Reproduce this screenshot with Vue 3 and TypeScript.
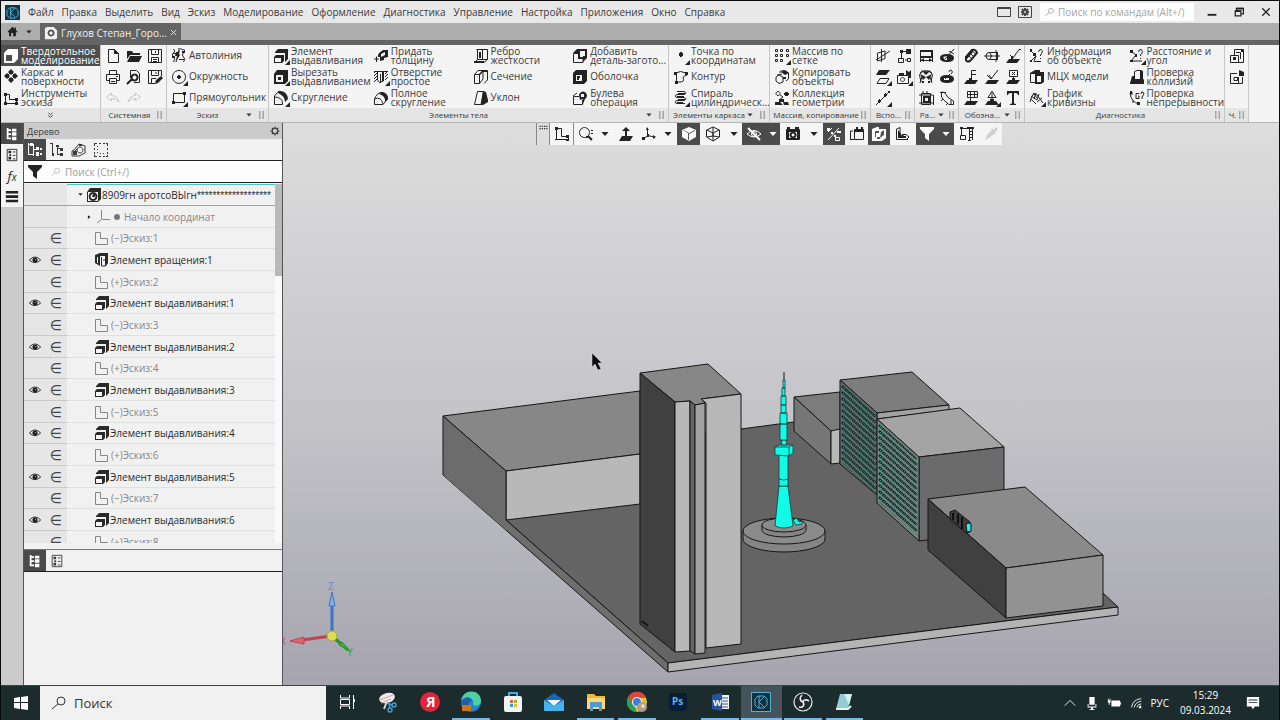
<script setup lang="ts">
import { h, ref } from 'vue'

/* Each icon is a list of "kind:path" parts on a 16 x 16 grid.
   s = thin stroke, b = bold stroke, f = solid,
   any other kind is a literal fill colour. */
const glyphs: Record<string, string> = {
  solidLight: 'f:M1 5L5 1H15V11L11 15H1Z|#4f4f4f:M3 7H9V13H3Z|s:M11 5L15 1',
  surface: 'f:M1 7L4 4L7 7L4 10ZM5 3L8 0L11 3L8 6ZM9 7L12 4L15 7L12 10ZM5 11L8 8L11 11L8 14Z|s:M4 7L8 11L12 7L8 3Z',
  sketchTools: 's:M2.5 3V13M3 4.5H6.5V9.5H13M13.5 9V13.5H3|f:M1 12H4V15H1ZM12 12H15V15H12ZM1 3H4V6H1ZM12 8H15V11H12Z',
  newFile: 's:M3.5 1.5H9.5L13.5 5.5V14.5H3.5Z|f:M9 1V6H14Z',
  open: 'f:M1 3H6L7 5H14V7H4L1 11ZM4 8H16L13 14H1Z',
  save: 's:M1.5 1.5H14.5V14.5H1.5ZM4.5 1.5V6.5H11.5V1.5M4.5 14.5V9.5H11.5V14.5M8.5 3V5M6 11.5H10M6 13.5H10',
  saveAs: 's:M1.5 1.5H14.5V7M8 14.5H1.5V1.5M4.5 1.5V6.5H11.5V1.5M4.5 14V9.5H9M9 3V5|f:M8 15L9 11L14 7L16 9L11 14Z',
  print: 's:M4.5 5V1.5H11.5V5M4 11.5H1.5V5.5H14.5V11.5H12M4.5 9.5H11.5V14.5H4.5ZM6 12.5H10|f:M11 7H13V8H11Z',
  preview: 's:M4.5 9V1.5H10.5L13.5 4.5V13.5H8|b:M8.5 5.5A3 3 0 1 0 8.6 5.5M6 10L1 15',
  undo: 's:M6.5 3L1.5 7L6.5 11V8.5Q11 8 14 12Q13 6 6.5 5.5Z',
  redo: 's:M9.5 3L14.5 7L9.5 11V8.5Q5 8 2 12Q3 6 9.5 5.5Z',
  autoline: 's:M2.5 1Q5 3 2.5 5T2.5 9T2.5 14M8 2L5 14M12.5 1Q15 3 12.5 5T12.5 9T12.5 14M2 5.5H8M8 11.5H13M7 1Q10 0 12 2|f:M5 4H7L9 2L8 6L9 7L6 12V8H4ZM11 3H14V5H11ZM1 8H4V10H1Z',
  circle: 's:M14.5 8A6.5 6.5 0 1 1 14.5 7.9|f:M7 6H9V7H10V9H9V10H7V9H6V7H7Z',
  rect: 's:M2.5 3.5H13.5V12.5H2.5Z|f:M12 2H15V5H12ZM1 11H4V14H1Z',
  extrude: 'f:M2 4L5 1H15V11L12 14V5H2Z|f:M1 9L3 7H11V13L9 15H1Z|#f4f4f4:M2 10H8V14H2Z',
  cut: 'f:M1 5L4 1H15V12L12 15H1Z|#f4f4f4:M3 6H10V13H3Z|f:M5 8H8V11H5Z',
  fillet: 's:M1.5 14.5V6Q4 1.5 8 1.5M1.5 14.5H9.5V13Q9 7 1.5 7|f:M5 1Q14 0 15 9L12 12Q12 6 5 3Z',
  thick: 's:M1 11H6M3.5 8.5V14M6.5 5.5L12.5 2.5|f:M6 5L10 2H15V9L11 10V12L7 13V9H5V7Z|#f4f4f4:M8 6L12 4V7L8 9Z',
  hole: 's:M1 2.5H15M4.5 2V11L7 14L10.5 11V2M1 4L3 2M1 7L4 4M1 10L4 7M1 13L4 10M12 5L15 2M12 8L15 5M12 11L15 8M7.5 5V13|f:M9 3H11V12L9 13Z',
  fullFillet: 's:M1.5 14.5V9Q4 2.5 9 2.5Q14.5 3 14.5 9L10 14.5H1.5M1.5 9Q8 6 10 14|f:M8 2Q15 3 15 9L12 12Q13 6 6 4Z',
  rib: 's:M3.5 1.5H14.5V11.5L11 14.5H1.5L4.5 11.5V2M4 11.5H14M9.5 2V11|b:M7 4V10M1 14H11',
  section: 's:M1.5 5.5L5 1.5H14.5V11L11 14.5M1.5 5.5H6.5V14.5H1.5ZM6.5 5.5L10 1.5V10L6.5 14.5|f:M6 5L10 1V3L7 6V14H6ZM10 1H14V3H10Z',
  draft: 's:M4.5 1.5H10.5L8 14.5H1.5Z|f:M10 1L13 2L15 10V12L10 15H8Z',
  addPart: 'f:M1 5L5 1H15V10L11 14V6Z|#f4f4f4:M8 3H13V8H8Z|s:M1.5 5.5H6.5V10.5H11V14.5H1.5Z|f:M6 5H8V9H12V11H6Z',
  shell: 'f:M1 4L4 1H15V12L12 15H1Z|#f4f4f4:M4 6H10V12H4Z|f:M5 7H8V9H7V11H5Z',
  bool: 's:M1.5 14.5V6.5H7M1.5 14.5H10.5V10M1 6L5 3|f:M7 5A4 4 0 1 1 13 9L11 14V9L8 10Z|#f4f4f4:M9 4H12V7H9Z',
  point: 'f:M6 5H7V4H9V5H10V8H9V9H7V8H6Z',
  contour: 's:M3 4Q7 1 13 4M3.5 4V13H7Q12 13 10 9Q10 7 14 6|f:M1 3H4V6H1ZM2 12H5V15H2ZM12 3H15V6H12Z',
  spiral: 's:M4 1.5H11Q15 3 11 4.5H4Q0 6 4 7.5H11Q15 9 11 10.5H4Q0 12 4 13.5H12M5 3.5H12M4 6.5H11M5 9.5H12M4 12.5H10',
  array: 's:M1.5 1.5H3.5V3.5H1.5ZM6.5 1.5H8.5V3.5H6.5ZM12.5 1.5H14.5V3.5H12.5ZM1.5 6.5H3.5V8.5H1.5ZM6.5 6.5H8.5V8.5H6.5ZM12.5 6.5H14.5V8.5H12.5ZM1.5 11.5H3.5V13.5H1.5ZM6.5 11.5H8.5V13.5H6.5Z',
  copy: 's:M6 4V2.5L9 1.5L14.5 4V10L12 12M2 8L5 6L9 8V13L5 14.5L2 12ZM3 6L8 5|f:M7 3L11 1L15 4L11 6ZM9 8H12V10H9Z',
  collection: 's:M4 1.5A2 2 0 1 0 4.1 1.5M9 7L5 10M6 5L9 7|f:M11 2H14V3H15V5H14V6H11V5H10V3H11ZM5 9H10V12H5ZM1 12H6L9 15H1ZM9 12H14L15 15H10Z',
  plane3d: 's:M2.5 5V13L10 10.5V3ZM1 12L15 3M6.5 1V14',
  plane: 'f:M4 1H15L11 6H1Z|s:M5 9.5H14L11 14.5H2Z',
  axis: 's:M1 15L15 1M4.5 9V13M10.5 3V7|f:M3 10H6V12H3ZM9 4H12V6H9ZM13 1H15V3H13Z',
  ctrlPoint: 's:M5.5 3V10M2.5 10.5H7.5V14.5H2.5ZM6 3.5H11M11.5 10.5H14.5V13.5H11.5ZM9 12H11|f:M10 1H15V6H10ZM4 2H7V5H4Z',
  camera: 's:M1.5 6.5H12.5V14.5H1.5ZM6.5 8.5A2 2 0 1 0 6.6 8.5|f:M3 4H8V6H3ZM10 1L13 3L15 1V9H13V6H10Z',
  dimLin: 's:M2.5 2V14M14.5 2V14M3 12.5H14|b:M2 3H14V9H2|f:M3 12L6 10V14ZM14 12L11 10V14Z',
  dimRad: 'f:M1 10Q1 6 8 6T15 10T8 14T1 10Z|#f4f4f4:M4 9L8 8V12H6Z|s:M6 11L15 1M10 3L15 6',
  dimAng: 's:M1.5 6L4 2H12L14.5 6L13 13M1.5 6L3 13M2 4Q8 0 14 4M4 8L2 14M12 8L14 14|f:M2 5L8 8L5 11ZM14 5L8 8L11 11ZM5 3H11L8 6ZM4 12H6V14H4ZM10 12H12V14H10Z',
  dimBox: 's:M3.5 3.5H12.5V14.5H3.5ZM5 1V4M9 1V4M15.5 5V15M1 5H15M1 13H16|b:M6 7H11V12H6Z',
  dimDia: 'f:M1 10Q1 6 8 6T15 10T8 14T1 10Z|#f4f4f4:M5 9H10V11H5Z|s:M6 10L11 5M10 3Q10 1 12 1Q15 3 12 5',
  dimArc: 's:M2.5 2V7Q4 10 10 14.5H14.5V11Q8 8 5.5 2.5ZM1 2.5H7M12 10V15M4 9L2 11M9 13L7 15',
  thread: 'b:M3 9L9 2Q13 1 14 5L7 13Q2 15 3 9Z|s:M5 7L9 11M7 5L11 9M9 3L13 6|f:M2 9L9 2L10 4L4 11Z',
  cyl: 's:M5 4.5H12.5V11.5H5Q2 11 2 8T5 4.5ZM0 8H16M6 5Q9 8 6 11M12 2V5M12 11V14|f:M12 4H14V12H12Z',
  rough: 'f:M1 15L4 11H15L12 15ZM6 8H8V11H6Z|s:M5 7L8 10L14 1.5H16',
  base: 'f:M1 15L4 11H15L12 15ZM6 9H9V11H6Z|s:M8.5 9V1.5H13M8 5.5H13',
  leader: 'f:M1 15L4 11H15L12 15Z|s:M3 6L7 10L14 1M5 6L8 10',
  mark: 'f:M1 15L4 11H15L12 15ZM7 9H10V11H7Z|s:M4.5 1.5H12.5V7.5H4.5ZM7 3L10 6M10 3L7 6M8.5 8V10',
  tolerance: 'f:M1 15L4 11H15L12 15Z|s:M4.5 1.5H14.5V7.5H4.5ZM7.5 2V11M11.5 2V7M5 4.5H14',
  weld: 'f:M1 15L4 11H12L15 15ZM6 9H10V11H6Z|s:M4 7.5L8 1L12 7.5ZM8 3V9',
  textT: 'f:M2 1H14V5H13Q13 3 10 3H9V13Q9 14 11 14V15H5V14Q7 14 7 13V3H6Q3 3 3 5H2Z',
  info: 's:M1.5 2.5L6 7M2 13L7 8L5 13.5H12M9.5 4Q10 1 12 1.5Q15 3 11.5 7V8M11.5 10V11|f:M1 1H3V4H1ZM4 5H7V8H4ZM1 12H3V14H1Z',
  mass: 'f:M1 4L6 1H11V3H15V13L12 15H6V5H1Z|#f4f4f4:M8 7H12V13H8Z|s:M1.5 5V13.5H6',
  curvature: 's:M1 12Q4 0 8 5T14 13M2 9L7 14M2 6L8 10M4 3L9 9M7 3L5 9M10 4L8 10M13 8L8 12',
  distance: 's:M2 3L7 7L2 13H13M9.5 4Q10 1 12 1.5Q15 3 11.5 7V8M11.5 10V11|f:M1 2H4V5H1ZM6 6H8V9H6ZM1 12H4V14H1Z',
  collision: 's:M5.5 9V2.5L8 1.5H12.5V9M1 13H12|f:M3 7H6V10H12V7L15 11V15H1Z|f:M11 2H14V10H11Z',
  continuity: 's:M1 3Q2 12 10 14M3 2V5M4 10V13M10 3.5H7V8.5H10V6H9M12 4Q12 1 14 2L15 4L13 7V9|f:M1 1H3V4H1ZM8 12H11V15H8Z',
  drawA: 's:M5.5 7V1.5H14.5V14.5H1.5V7.5H9.5V14M7 4.5H11.5V11|f:M12 2H14V4H12ZM4 9H7V12H4Z',
  drawB: 's:M8 4.5H1.5V14.5H13.5V8M5 8.5H8.5V11.5H5ZM9.5 8V14|f:M10 1L15 3V7H10Z',
  gear: 'b:M8 3.5A4.5 4.5 0 1 1 7.9 3.5M8 1V4M8 12V15M1 8H4M12 8H15M3 3L5 5M11 11L13 13M13 3L11 5M5 11L3 13',
  tree: 'b:M3 1V14M3 3.5H7M3 8H7M3 13H7|f:M8 2H13V5H8ZM8 6H13V10H8ZM8 11H13V15H8Z',
  params: 's:M2.5 1.5H13.5V14.5H2.5ZM9 4.5H12M9 8.5H12M9 12.5H12|f:M4 3H7V6H4ZM4 10H7V13H4ZM5 7H7V9H5Z',
  bars: 'f:M1 1H15V4H1ZM1 6H15V9H1ZM1 11H15V14H1Z',
  treeA: 's:M1.5 1V13M1 2.5H4M1 12.5H6M6.5 2V14M6 7.5H9|f:M3 1H6V4H3ZM9 5H12V8H9ZM9 10H12V14H9ZM13 6H15V8H13ZM13 11H15V13H13Z',
  treeB: 's:M1 1.5H4M3.5 1V13M8.5 4V13M8 6.5H11M8 12.5H11|f:M3 11H5V14H3ZM7 3H10V5H7ZM11 6H14V9H11ZM11 11H14V14H11Z',
  relations: 's:M3 8L8 2L14 4V11L8 14H1V9ZM9 5A3 3 0 1 0 9.1 5M3 10L7 6|f:M2 9H6V13H2ZM8 2H11V4H8Z',
  selectBox: 'f:M1 1H4V2H2V4H1ZM6 1H8V2H6ZM10 1H12V2H10ZM13 1H15V4H14V2H13ZM1 6H2V8H1ZM1 10H2V12H1ZM14 6H15V8H14ZM14 10H15V12H14ZM1 13H2V14H4V15H1ZM6 14H8V15H6ZM10 14H12V15H10ZM13 14H14V13H15V15H13ZM4 4H5V5H4ZM4 7H5V8H4ZM4 10H5V11H4ZM7 11H8V12H7ZM10 11H11V12H10Z',
  funnel: 'f:M1 1H15V3L10 8V15L6 12V8L1 3Z',
  search: 's:M7 6A4 4 0 1 0 15 6A4 4 0 1 0 7 6M8 9L2 14',
  docPart: 'f:M1 5L4 1H15V12L12 15H1Z|#f4f4f4:M2 5H12V14H2Z|b:M7 6A3.5 3.5 0 1 0 7.1 6|f:M7 7H9V10H6Z',
  docLight: 'f:M1 4Q1 1 4 1H11L15 5V14L13 15H1Z|#4a4a4a:M8 4A4 4 0 1 0 8.1 4Z|f:M8 6A2 2 0 1 0 8.1 6Z',
  origin: 's:M6.5 1V10.5M7 10.5H15M6 11L2 14',
  sketch: 's:M1.5 2.5H6.5V8.5H13.5V14.5H1.5Z',
  revolve: 'f:M1 3L6 1H14V11L12 14V4H6V14L1 11Z|s:M7.5 5V14H11.5V4M9 8H11|#f4f4f4:M3 5H4V11H3Z',
  eye: 's:M1.5 8Q8 1 14.5 8Q8 14 1.5 8|f:M8 5A3 3 0 1 0 8.1 5Z|#e6e6e6:M8 7H9V8H8Z',
  fix: 's:M2.5 1V14M1 2.5H7.5V10.5H14.5V14M1 13.5H15|f:M1 1H4V4H1ZM12 9H15V12H12ZM12 13H15V15H12Z',
  magnify: 's:M11.5 6.5A5 5 0 1 0 11.5 6.6M13 4.5H15M13 7.5H15|b:M10 10L14 14|f:M8 10H10V12H8Z',
  lift: 'f:M4 10H15L12 15H1ZM8 1L12 5H9V11H7V5H4Z',
  axes: 's:M6.5 2V10L2 13M7 9.5L13 11|f:M6 1L8 4H5ZM12 9L15 11L12 13ZM1 11H4V14H1ZM6 8H8V11H6Z',
  cube: 'f:M1 4L8 1L15 4V11L8 15L1 11Z|#555:M7 7H8V14H7ZM2 4L3 4L8 7L14 4V5L8 8Z',
  wire: 's:M1.5 4L8 1L14.5 4V11L8 15L1.5 11ZM2 4L8 7L14 4M8 7V15M8 1V10L14 11M8 10L2 11',
  eyeOff: 's:M1 8Q8 1 15 8Q8 14 1 8M5.5 8A2.5 2.5 0 1 0 10.5 8A2.5 2.5 0 1 0 5.5 8|b:M2 2L14 14',
  snapCam: 's:M1.5 3.5H14.5V13.5H1.5Z|f:M2 1H5V4H2ZM10 1H14V4H10ZM1 4H4V13H1ZM12 4H15V13H12ZM4 4H12V6H4ZM4 12H12V14H4Z|b:M8 6.5A2.5 2.5 0 1 0 8.1 6.5',
  constraint: 's:M13 2L2 14M9.5 11.5H13.5V14.5H9.5ZM2 6L6 2|f:M11 5H15V7H11ZM1 2H4V5H1ZM5 6H7V8H5ZM8 9H10V11H8Z',
  windowIn: 's:M5.5 3.5H14.5V13.5H5.5ZM1.5 13V5H4M1 13.5H5|f:M7 1H9V4H7ZM12 1H14V4H12ZM5 4H15V6H5Z',
  solidBox: 'f:M1 3L6 1H8V3L15 3V12L11 15H1Z|#555:M4 5H8V7H5V11H4ZM10 6L13 4V9L9 12ZM6 11H9V13H6Z',
  hiddenPart: 's:M1.5 3V13.5H13M1.5 3L5 1.5V9L9 10M7 8.5H11L14 11L12 13|f:M3 4L6 8V10H11V12H3Z',
  gauge: 's:M1 2.5H9M2.5 2V9M1.5 9.5H6.5V13.5H1.5ZM10.5 3V14M13.5 3V14M9 14.5H12|f:M1 1H4V3H1ZM8 1H15V3H8ZM11 5H13V6H11ZM11 8H13V9H11ZM11 11H13V12H11Z',
  pen: 'f:M2 14L4 9L9 4L8 3L9 2L11 4L13 1L15 3L12 6L13 8L11 8L6 12Z',
  grip: 'f:M2 1H5V3H2ZM9 1H12V3H9ZM2 5H5V7H2ZM9 5H12V7H9ZM2 9H5V11H2ZM9 9H12V11H9ZM2 13H5V15H2ZM9 13H12V15H9Z',
  gripWide: 'f:M1 5H3V7H1ZM5 5H7V7H5ZM9 5H11V7H9ZM13 5H15V7H13ZM1 9H3V11H1ZM5 9H7V11H5ZM9 9H11V11H9ZM13 9H15V11H13Z',
  down: 'f:M1 4H15L8 12Z',
  right: 'f:M5 3L12 8L5 13Z',
  chevrons: 'b:M3 2L8 6L13 2M3 8L8 12L13 8',
  home: 'f:M1 8L8 1L11 4V2H13V6L15 8V9H13V15H9V10H6V15H3V9H1Z',
  close: 'b:M2 2L14 14M14 2L2 14',
  minimize: 'f:M1 11H15V14H1Z',
  restore: 'b:M2 6H11V14H2ZM4 5V2H15V11H12|f:M2 5H11V8H2ZM4 1H15V4H4Z',
  frame: 's:M1.5 3.5H14.5V12.5H1.5ZM2 4.5H14',
  frameGear: 's:M1.5 2.5H14.5V13.5H1.5Z|b:M8 6A2 2 0 1 0 8.1 6M8 4V6M8 10V12M4 8H6M10 8H12M5 5L6 6M10 10L11 11M11 5L10 6M6 10L5 11',
  taskView: 's:M1.5 1V4H10.5V1M1.5 15V12H10.5V15M1.5 5.5H10.5V10.5H1.5ZM14.5 1V15|f:M14 5H16V8H14Z',
  windows: 'f:M1 3L7 2V7H1ZM8 2L15 1V7H8ZM1 8H7V14L1 13ZM8 8H15V15L8 14Z',
  chevUp: 's:M2 11L8 5L14 11',
  mic: 'f:M5 1H11V10H5ZM3 9H4V12H12V9H13V13H9V15H11V16H5V15H7V13H3Z',
  battery: 'f:M5 5H15V12H5ZM1 3H2V5H3V3H4V7L3 8V10H2V8L1 7Z|s:M15.5 7V10',
  wifi: 's:M3 13Q4 4 14 3M6 13Q7 7 14 6M9 13Q10 9 14 9|f:M12 11H14V14H11Z',
  note: 'f:M1 1H15V12H10L8 15L6 12H1Z|#1c2b2c:M3 4H13V5H3ZM3 7H13V8H3Z',
}

const Icon = (p: { name: string; corner?: boolean }) => {
  const parts = glyphs[p.name].split('|').map((part) => {
    const at = part.indexOf(':')
    const kind = part.slice(0, at)
    const d = part.slice(at + 1)
    if (kind === 's') return h('path', { d, fill: 'none', stroke: 'currentColor', 'stroke-width': 1 })
    if (kind === 'b') return h('path', { d, fill: 'none', stroke: 'currentColor', 'stroke-width': 2 })
    return h('path', { d, fill: kind === 'f' ? 'currentColor' : kind })
  })
  if (p.corner) parts.push(h('path', { d: 'M17 12V17H12Z', fill: 'currentColor' }))
  return h('svg', { viewBox: '0 0 16 16', 'aria-hidden': 'true', class: 'icon' }, parts)
}

const menu = ['Файл', 'Правка', 'Выделить', 'Вид', 'Эскиз', 'Моделирование', 'Оформление', 'Диагностика', 'Управление', 'Настройка', 'Приложения', 'Окно', 'Справка']

interface Tool { icon: string; label: string; corner?: boolean }
interface Group { id: string; title: string; cols: number; more?: boolean; tools?: Tool[]; icons?: string[] }
const t = (icon: string, label: string, corner = false): Tool => ({ icon, label, corner })

const modes = [t('solidLight', 'Твердотельное\nмоделирование'), t('surface', 'Каркас и\nповерхности'), t('sketchTools', 'Инструменты\nэскиза')]
const mode = ref(0)

const groups: Group[] = [
  { id: 'system', title: 'Системная', cols: 3, icons: ['newFile', 'print', 'undo', 'open', 'preview', 'redo', 'save', 'saveAs'] },
  { id: 'sketch', title: 'Эскиз', cols: 1, more: true, tools: [t('autoline', 'Автолиния'), t('circle', 'Окружность', true), t('rect', 'Прямоугольник', true)] },
  {
    id: 'body', title: 'Элементы тела', cols: 4, more: true,
    tools: [
      t('extrude', 'Элемент\nвыдавливания', true), t('cut', 'Вырезать\nвыдавливанием', true), t('fillet', 'Скругление', true),
      t('thick', 'Придать\nтолщину'), t('hole', 'Отверстие\nпростое', true), t('fullFillet', 'Полное\nскругление'),
      t('rib', 'Ребро\nжесткости'), t('section', 'Сечение'), t('draft', 'Уклон'),
      t('addPart', 'Добавить\nдеталь-загото...'), t('shell', 'Оболочка'), t('bool', 'Булева\nоперация'),
    ],
  },
  { id: 'wireframe', title: 'Элементы каркаса', cols: 1, more: true, tools: [t('point', 'Точка по\nкоординатам', true), t('contour', 'Контур'), t('spiral', 'Спираль\nцилиндрическ...', true)] },
  { id: 'copying', title: 'Массив, копирование', cols: 1, tools: [t('array', 'Массив по\nсетке', true), t('copy', 'Копировать\nобъекты'), t('collection', 'Коллекция\nгеометрии')] },
  { id: 'aux', title: 'Вспо...', cols: 2, icons: ['plane3d', 'plane', 'axis', 'ctrlPoint', 'camera'] },
  { id: 'dims', title: 'Ра...', cols: 2, more: true, icons: ['dimLin', 'dimAng', 'dimBox', 'dimRad', 'dimDia', 'dimArc'] },
  { id: 'marks', title: 'Обозна...', cols: 3, more: true, icons: ['thread', 'base', 'tolerance', 'cyl', 'leader', 'weld', 'rough', 'mark', 'textT'] },
  {
    id: 'diag', title: 'Диагностика', cols: 2,
    tools: [t('info', 'Информация\nоб объекте'), t('mass', 'МЦХ модели'), t('curvature', 'График\nкривизны', true), t('distance', 'Расстояние и\nугол', true), t('collision', 'Проверка\nколлизий'), t('continuity', 'Проверка\nнепрерывности')],
  },
  { id: 'drawing', title: 'Ч.', cols: 1, icons: ['drawA', 'drawB'] },
]
const cornered = ['plane', 'axis', 'camera', 'weld']

const rail = ['tree', 'params', 'fx', 'bars']
const treeTools = ['treeA', 'treeB', 'relations', 'selectBox']

interface Row { kind: 'sketch' | 'extrude' | 'revolve'; text: string; sign?: string }
const rows: Row[] = [
  { kind: 'sketch', sign: '(−)', text: 'Эскиз:1' },
  { kind: 'revolve', text: 'Элемент вращения:1' },
]
for (let i = 1; i <= 6; i++) {
  rows.push({ kind: 'sketch', sign: i % 2 ? '(+)' : '(−)', text: `Эскиз:${i + 1}` })
  rows.push({ kind: 'extrude', text: `Элемент выдавливания:${i}` })
}
rows.push({ kind: 'sketch', sign: '(+)', text: 'Эскиз:8' })

interface Cell { icon: string; w: number; dark?: boolean; faint?: boolean; line?: boolean; label: string }
const c = (icon: string, w: number, label: string, flags = ''): Cell => ({ icon, w, label, dark: flags.includes('d'), faint: flags.includes('f'), line: flags.includes('l') })
const viewTools: Cell[] = [
  c('gripWide', 14, 'Переместить', 'l'), c('fix', 24, 'Привязка', 'l'), c('magnify', 24, 'Масштаб'), c('down', 14, 'Варианты масштаба'),
  c('lift', 27, 'Нормально к'), c('axes', 20, 'Ориентация'), c('down', 18, 'Варианты ориентации'), c('cube', 23, 'Полутоновое', 'd'),
  c('wire', 25, 'Каркас'), c('down', 17, 'Варианты отображения'), c('eyeOff', 23, 'Скрыть', 'd'), c('down', 15, 'Варианты скрытия', 'd'),
  c('snapCam', 25, 'Сцена'), c('down', 18, 'Варианты сцены'), c('constraint', 22, 'Ограничения', 'd'), c('windowIn', 23, 'Сечение модели'),
  c('solidBox', 22, 'Упрощение', 'd'), c('hiddenPart', 26, 'Зона'), c('funnel', 22, 'Фильтр', 'd'), c('down', 16, 'Варианты фильтра', 'd'),
  c('gauge', 25, 'Измерить'), c('pen', 23, 'Свойства', 'f'),
]

const windowRowsA = Array.from({ length: 14 }, (_, i) => 386 + i * 6)
const windowRowsB = Array.from({ length: 14 }, (_, i) => 425 + i * 6)

const tasks = [
  { id: 'view', name: 'Представление задач' }, { id: 'snip', name: 'Ножницы' }, { id: 'yandex', name: 'Яндекс' },
  { id: 'edge', name: 'Edge', open: true }, { id: 'store', name: 'Магазин' }, { id: 'mail', name: 'Почта' },
  { id: 'files', name: 'Проводник', open: true }, { id: 'chrome', name: 'Chrome', open: true }, { id: 'ps', name: 'Photoshop' },
  { id: 'word', name: 'Word', open: true }, { id: 'kompas', name: 'КОМПАС', open: true, active: true },
  { id: 'obs', name: 'OBS', open: true }, { id: 'notes', name: 'Блокнот', open: true },
]
</script>

<template>
  <div class="desktop">
    <header class="menubar">
      <svg class="logo" viewBox="0 0 16 16" aria-hidden="true">
        <rect width="16" height="16" fill="#163544" />
        <path d="M5 3H11L14 6V11L11 14H5L2 11V6ZM6 3V13M6 8L11 3M6 8L11 13" fill="none" stroke="#58b8dc" stroke-width="1" />
      </svg>
      <nav class="menu">
        <button v-for="m in menu" :key="m" type="button">{{ m }}</button>
      </nav>
      <button type="button" class="plain" aria-label="Окно"><Icon name="frame" /></button>
      <button type="button" class="plain" aria-label="Настройки окна"><Icon name="frameGear" /></button>
      <label class="command">
        <Icon name="search" />
        <input type="text" placeholder="Поиск по командам (Alt+/)" aria-label="Поиск по командам">
      </label>
      <div class="win-buttons">
        <button type="button" aria-label="Свернуть"><Icon name="minimize" /></button>
        <button type="button" aria-label="Восстановить"><Icon name="restore" /></button>
        <button type="button" aria-label="Закрыть"><Icon name="close" /></button>
      </div>
    </header>

    <div class="tabs">
      <button type="button" class="home" aria-label="Главная"><Icon name="home" /></button>
      <button type="button" class="home-more" aria-label="Список документов"><Icon name="down" /></button>
      <div class="tab">
        <Icon name="docLight" />
        <span>Глухов Степан_Горо...</span>
        <button type="button" aria-label="Закрыть вкладку"><Icon name="close" /></button>
      </div>
    </div>

    <div class="ribbon">
      <section class="group modes">
        <div class="cells">
          <button v-for="(m, i) in modes" :key="m.icon" type="button" class="tool" :class="{ on: mode === i }" @click="mode = i">
            <Icon :name="m.icon" /><span>{{ m.label }}</span>
          </button>
        </div>
        <div class="foot"><Icon name="chevrons" /></div>
      </section>
      <section v-for="g in groups" :key="g.id" class="group" :class="['g-' + g.id, 'cols-' + g.cols]">
        <div v-if="g.tools" class="cells">
          <button v-for="x in g.tools" :key="x.label" type="button" class="tool">
            <Icon :name="x.icon" :corner="x.corner" /><span>{{ x.label }}</span>
          </button>
        </div>
        <div v-else class="cells small">
          <button v-for="x in g.icons" :key="x" type="button" class="tool only" :class="{ off: x === 'undo' || x === 'redo' }" :aria-label="x">
            <Icon :name="x" :corner="cornered.includes(x)" />
          </button>
        </div>
        <div class="foot">
          <span>{{ g.title }}</span>
          <Icon v-if="g.more" name="down" class="more" />
          <Icon name="grip" class="grip" />
        </div>
      </section>
      <div class="rest"></div>
    </div>

    <main class="work">
      <nav class="rail">
        <button v-for="(r, i) in rail" :key="r" type="button" :class="{ on: i === 0 }" :aria-label="r">
          <i v-if="r === 'fx'">f<sub>x</sub></i><Icon v-else :name="r" />
        </button>
      </nav>
      <aside class="panel">
        <div class="panel-title"><h2>Дерево</h2><button type="button" aria-label="Настройка панели"><Icon name="gear" /></button></div>
        <div class="panel-tools">
          <button v-for="(r, i) in treeTools" :key="r" type="button" :class="{ on: i === 0 }" :aria-label="r"><Icon :name="r" /></button>
        </div>
        <div class="filter">
          <button type="button" aria-label="Фильтр"><Icon name="funnel" /></button>
          <label><Icon name="search" /><input type="text" placeholder="Поиск (Ctrl+/)" aria-label="Поиск по дереву"></label>
        </div>
        <div class="tree-box">
          <ul class="tree">
            <li class="root">
              <span class="marks"></span>
              <span class="node top"><Icon name="down" class="tw" /><Icon name="docPart" /><span>8909гн аротсоВЫгн<span class="stars">*******************</span></span></span>
            </li>
            <li class="dim">
              <span class="marks"></span>
              <span class="node start"><Icon name="right" class="tw" /><Icon name="origin" /><b></b><span>Начало координат</span></span>
            </li>
            <li v-for="r in rows" :key="r.text" :class="{ dim: r.kind === 'sketch' }">
              <span class="marks">
                <button v-if="r.kind !== 'sketch'" type="button" aria-label="Видимость"><Icon name="eye" /></button>
                <em>∈</em>
              </span>
              <span class="node"><Icon :name="r.kind" /><small v-if="r.sign">{{ r.sign }}</small><span>{{ r.text }}</span></span>
            </li>
          </ul>
          <div class="scroll"><div></div></div>
        </div>
        <div class="panel-tools lower">
          <button type="button" class="on" aria-label="Структура"><Icon name="tree" /></button>
          <button type="button" aria-label="Параметры"><Icon name="params" /></button>
        </div>
        <div class="empty"></div>
      </aside>

      <div class="viewport">
        <svg class="scene" viewBox="283 123 996 562" preserveAspectRatio="xMidYMid slice" role="img" aria-label="Модель городского квартала">
          <g stroke="#161616" stroke-width="1" stroke-linejoin="round">
            <path d="M506 520L640 440L741 429L794 422L850 440L1000 520L1104 594L1118 607L668 663Z" fill="#646464" />
            <path d="M443 475L668 672V663L506 520Z" fill="#6e6e6e" />
            <path d="M668 663L1118 607V615L668 672Z" fill="#b4b4b4" />
            <path d="M443 416L640 391V454L506 471Z" fill="#878787" />
            <path d="M506 471L640 454V504L506 520Z" fill="#b8b8b8" />
            <path d="M443 416L506 471V530L443 475Z" fill="#6c6c6c" stroke="none" />
            <path d="M506 520V471L443 416V475" fill="none" />

            <path d="M640 373L708 364L741 394L701 399L705 403L695 405L690 401L675 402Z" fill="#878787" />
            <path d="M640 373L675 402V652L640 624Z" fill="#404040" />
            <path d="M675 402L690 401V651L675 652Z" fill="#b8b8b8" />
            <path d="M701 399L741 394V644L706 648V403Z" fill="#b8b8b8" />
            <path d="M690 401L695 405V654L690 651Z" fill="#646464" />
            <path d="M695 405L705 403V653L695 654Z" fill="#a2a2a2" />
            <path d="M642 621L648 626" stroke-width="2" />

            <path d="M743 531V539A41 13 0 0 0 825 539V531" fill="#858585" />
            <ellipse cx="784" cy="531" rx="41" ry="13" fill="#8b8b8b" />
            <path d="M762 525V530A22 7 0 0 0 806 530V525" fill="#858585" />
            <ellipse cx="784" cy="525" rx="22" ry="7" fill="#8b8b8b" />
            <path d="M784 372V381" stroke-width="1.5" stroke="#555" />

            <path d="M794 397L840 392V430L831 431Z" fill="#7c7c7c" />
            <path d="M794 397L831 431V464L794 431Z" fill="#767676" />
            <path d="M831 431L840 429V463L831 464Z" fill="#b8b8b8" />
            <path d="M840 380L912 372L949 405L877 413Z" fill="#7d7d7d" />
            <path d="M877 413L949 405V410L877 419Z" fill="#a2a2a2" />
            <path d="M840 380L877 413V495L840 464Z" fill="#5d726e" />
            <path d="M877 419L960 408L1004 447L919 457Z" fill="#a4a4a4" />
            <path d="M919 457L1004 447V495L928 540L919 541Z" fill="#6b6b6b" />
            <path d="M877 419L919 457V541L877 503Z" fill="#72867f" />
          </g>
          <g fill="none">
            <clipPath id="face-a"><path d="M841 383L876 414V494L841 462Z" /></clipPath>
            <clipPath id="face-b"><path d="M878 423L918 459V536L878 501Z" /></clipPath>
            <g clip-path="url(#face-a)">
              <g v-for="y in windowRowsA" :key="y">
                <path :d="`M842 ${y}L876 ${y + 31}`" stroke="#142624" stroke-width="2.4" stroke-dasharray="4 0.6" />
                <path :d="`M843 ${y + 1}L876 ${y + 31}`" stroke="#2fb3a4" stroke-width="0.9" stroke-dasharray="1.6 3" />
              </g>
            </g>
            <g clip-path="url(#face-b)">
              <g v-for="y in windowRowsB" :key="y">
                <path :d="`M879 ${y}L917 ${y + 34}`" stroke="#142624" stroke-width="2.4" stroke-dasharray="4 0.6" />
                <path :d="`M880 ${y + 1}L917 ${y + 34}`" stroke="#2fb3a4" stroke-width="0.9" stroke-dasharray="1.6 3" />
              </g>
            </g>
          </g>
          <g stroke="#123c3a" stroke-width="0.8" stroke-linejoin="round" fill="#10fbe8">
            <path d="M779 486L775 526Q784 530 793 526L788 486Z" />
            <path d="M779 479H788V486H779Z" />
            <path d="M779 455H788V479Q784 481 779 479Z" />
            <path d="M775 447L779 445H793V453L789 456L775 455Z" />
            <path d="M775 447H789V456M789 447L793 445" fill="none" />
            <path d="M782 445L781 440H787L786 445Z" />
            <path d="M780 424H787V440H780ZM780 413H787V424H780ZM781 405H786V413H781ZM781 396H786V405H781ZM782 388H785V396H782ZM783 380H785V388H783Z" />
            <path d="M793 520L797 518L799 522L802 521V524L796 525Z" />
          </g>
          <g stroke="#161616" stroke-width="1" stroke-linejoin="round">
            <path d="M928 499L1025 487L1103 555L1006 568Z" fill="#8a8a8a" />
            <path d="M928 499L1006 568V618L928 550Z" fill="#404040" />
            <path d="M1006 568L1103 555V606L1006 618Z" fill="#929292" />
            <path d="M950 512L955 510L970 522V532L966 533L950 519Z" fill="#3c3c3c" />
            <path d="M953 513V520M958 514V524M962 517V529" stroke="#111" stroke-width="2" />
            <path d="M966 525L968 523L971 524V531L967 532Z" fill="#10fbe8" />
          </g>
          <g>
            <path d="M332 636V606" stroke="#3f74c4" stroke-width="3" />
            <path d="M329 606L332 592L335 606Z" fill="#82b0ea" stroke="#3f74c4" />
            <path d="M331 636L302 640" stroke="#c04450" stroke-width="3" />
            <path d="M304 637L290 641L304 644Z" fill="#dc6874" stroke="#c04450" />
            <path d="M332 636L348 650" stroke="#2f8d38" stroke-width="3" />
            <path d="M339 645L342 642L350 651Z" fill="#39ae42" stroke="#2f8d38" />
            <circle cx="332" cy="636" r="5" fill="#dcdc55" stroke="#a9a748" />
            <text x="328" y="590" class="axis z">Z</text>
            <text x="280" y="645" class="axis x">X</text>
            <text x="347" y="656" class="axis y">Y</text>
          </g>
          <path d="M592 353V367L595 364L598 370L601 369L598 363H602Z" fill="#0b0b0b" stroke="#ddd" stroke-width="0.5" />
        </svg>
        <div class="view-tools">
          <button v-for="(v, i) in viewTools" :key="i" type="button" :aria-label="v.label" :class="{ dark: v.dark, faint: v.faint, line: v.line, arrow: v.icon === 'down' }" :style="{ width: v.w + 'px' }"><Icon :name="v.icon" /></button>
        </div>
      </div>
    </main>

    <footer class="taskbar">
      <button type="button" class="start" aria-label="Пуск"><Icon name="windows" /></button>
      <label class="find"><Icon name="search" /><input type="text" placeholder="Поиск" aria-label="Поиск в системе"></label>
      <div class="tasks">
        <button v-for="k in tasks" :key="k.id" type="button" :aria-label="k.name" :class="{ open: k.open, active: k.active }">
          <Icon v-if="k.id === 'view'" name="taskView" />
          <svg v-else class="app" viewBox="0 0 22 22" aria-hidden="true">
            <g v-if="k.id === 'snip'"><ellipse cx="10" cy="7" rx="8" ry="5" fill="#f4e9ea" transform="rotate(-15 10 7)" /><path d="M3 9L16 4M4 12L14 8" stroke="#c9a5aa" /><path d="M10 10L7 18" stroke="#d9d9d9" stroke-width="2" /><path d="M10 12L15 14M12 12L13 18" stroke="#3da0d0" stroke-width="1.5" /><circle cx="17" cy="14" r="2" fill="none" stroke="#3da0d0" stroke-width="1.5" /><circle cx="13" cy="19" r="2" fill="none" stroke="#3da0d0" stroke-width="1.5" /></g>
            <g v-else-if="k.id === 'yandex'"><circle cx="11" cy="11" r="10" fill="#e0243c" /><text x="7" y="16" class="ya">Я</text></g>
            <g v-else-if="k.id === 'edge'"><circle cx="11" cy="11" r="10" fill="#1f86d8" /><path d="M1 10C3 -3 21 -2 21 10C21 15 14 16 13 13C15 8 9 5 1 10Z" fill="#4fd0a0" /><path d="M1 10C5 4 12 6 12 10C7 10 8 17 13 20C6 22 0 17 1 10Z" fill="#1b63b8" /><rect x="2" y="14" width="9" height="6" fill="#c9761c" /><path d="M5 14V12H8V14" fill="none" stroke="#7c4610" /></g>
            <g v-else-if="k.id === 'store'"><rect x="2" y="5" width="18" height="16" rx="2" fill="#f1f3f5" /><path d="M7 5V2H15V5" fill="none" stroke="#4fa7e0" stroke-width="2" /><path d="M8 9H11V12H8Z" fill="#e8603c" /><path d="M12 9H15V12H12Z" fill="#8bb83c" /><path d="M8 13H11V16H8Z" fill="#3c9bd8" /><path d="M12 13H15V16H12Z" fill="#eab73c" /></g>
            <g v-else-if="k.id === 'mail'"><path d="M1 9L11 2L21 9V20H1Z" fill="#1566b4" /><path d="M4 9H18L11 15Z" fill="#f3f6fa" /><path d="M1 9L11 15L21 9V20H1Z" fill="#45b2ee" /></g>
            <g v-else-if="k.id === 'files'"><path d="M2 3H9L11 5H20V18H2Z" fill="#f0b83a" /><path d="M2 7H20V18H2Z" fill="#fbd873" /><path d="M5 11H17V20H14V16H8V20H5Z" fill="#4a9ad6" /></g>
            <g v-else-if="k.id === 'chrome'"><circle cx="11" cy="11" r="10" fill="#e6c12f" /><path d="M2 6C6 -1 17 -1 20 7H11L6 13Z" fill="#dd4638" /><path d="M2 6L8 14L11 21C3 21 -1 13 2 6Z" fill="#2f9d52" /><circle cx="11" cy="11" r="5" fill="#fff" /><circle cx="11" cy="11" r="4" fill="#3f7de0" /><circle cx="16" cy="16" r="5" fill="#b39c86" /><circle cx="17" cy="15" r="2" fill="#e4d4c4" /></g>
            <g v-else-if="k.id === 'ps'"><rect x="2" y="2" width="18" height="18" rx="3" fill="#071e36" /><text x="5" y="14" class="ps">Ps</text></g>
            <g v-else-if="k.id === 'word'"><path d="M12 4H20V18H12Z" fill="#f4f6fa" /><path d="M13 7H19M13 10H19M13 13H19M13 16H19" stroke="#2b5797" /><path d="M3 4L13 2V20L3 18Z" fill="#28539a" /><text x="4" y="15" class="wd">W</text></g>
            <g v-else-if="k.id === 'kompas'"><rect x="1.5" y="1.5" width="19" height="19" fill="#14303c" stroke="#4fb2d4" /><path d="M8 5H14L17 8V14L14 17H8L5 14V8ZM9 5V17M9 11L14 6M9 11L14 16" fill="none" stroke="#4fb2d4" /></g>
            <g v-else-if="k.id === 'obs'"><circle cx="11" cy="11" r="9" fill="#20282b" stroke="#e7ecec" stroke-width="1.2" /><path d="M10 4C7 7 8 10 11 11M17 10C14 8 11 9 11 11M7 16C11 17 13 14 11 11" fill="none" stroke="#e7ecec" stroke-width="1.6" /></g>
            <g v-else><path d="M7 3H19L15 18H3Z" fill="#8fcdd0" /><path d="M11 3H19L16 14Z" fill="#d7eef0" /><path d="M3 18H15L18 15" fill="none" stroke="#e9f3f3" stroke-width="2" /></g>
          </svg>
        </button>
      </div>
      <div class="tray">
        <Icon name="chevUp" /><Icon name="mic" /><Icon name="battery" /><Icon name="wifi" />
        <span>РУС</span>
        <time>15:29<br>09.03.2024</time>
        <button type="button" aria-label="Уведомления"><Icon name="note" /></button>
      </div>
    </footer>
  </div>
</template>

<style>
html, body, #app { height: 100%; }
body { margin: 0; }
</style>

<style scoped>
.desktop {
  box-sizing: border-box;
  min-height: 100vh;
  display: flex;
  flex-direction: column;
  border: 1px solid #0a0a0a;
  border-bottom: 0;
  background: #e6e6e6;
  color: #3a3a3a;
  font-family: "Open Sans", "Noto Sans", sans-serif;
  font-size: 10px;
  overflow: hidden;
}
button { margin: 0; padding: 0; border: 0; background: none; color: inherit; font: inherit; cursor: pointer; }
input { min-width: 0; flex: 1; padding: 0; border: 0; outline: 0; background: none; font: inherit; color: inherit; }
input::placeholder { color: inherit; opacity: 1; }
label, button { display: flex; align-items: center; }
.icon { width: 16px; height: 16px; flex: none; overflow: visible; display: block; }

.menubar { display: flex; align-items: center; height: 22px; padding-left: 4px; background: #e8e8e8; }
.logo { width: 15px; height: 15px; }
.menu { flex: 1; display: flex; gap: 8px; padding-left: 8px; }
.plain { width: 21px; justify-content: center; color: #444; }
.command { width: 150px; height: 18px; margin-left: 5px; padding-left: 4px; gap: 4px; background: #fff; color: #a5a5a5; }
.command .icon { width: 10px; height: 10px; color: #888; }
.win-buttons { display: flex; width: 80px; justify-content: space-around; color: #222; padding-left: 5px; }
.win-buttons .icon { width: 10px; height: 10px; }

.tabs { display: flex; height: 17px; background: #adadad; border-bottom: 5px solid #646464; }
.home { padding-left: 6px; color: #222; }
.home .icon { width: 11px; height: 11px; }
.home-more { width: 22px; justify-content: center; color: #222; }
.home-more .icon { width: 6px; height: 6px; }
.tab { display: flex; align-items: center; gap: 3px; padding: 2px 4px 0; background: #646464; color: #f0f0f0; }
.tab .icon { width: 14px; height: 14px; }
.tab button .icon { width: 7px; height: 7px; }

.ribbon { display: flex; background: #f4f4f4; border-bottom: 1px solid #b5b5b5; }
.group { display: flex; flex-direction: column; box-sizing: border-box; border-right: 1px solid #c6c6c6; flex: none; }
.cells { display: grid; grid-auto-flow: column; grid-template-rows: repeat(3, 21px); grid-auto-columns: minmax(0, 1fr); }
.small { padding: 0 1px; }
.cols-1 .small, .g-aux .small { grid-auto-columns: 21px; }
.tool { gap: 2px; padding-left: 4px; text-align: left; line-height: 9px; white-space: pre; color: #3a3a3a; }
.tool .icon { color: #222; }
.only { padding: 0; justify-content: center; }
.off .icon { color: #c8c8c8; }
.modes { width: 100px; }
.modes .tool { padding-left: 2px; }
.modes .on, .modes .on .icon { background: #4f4f4f; color: #fff; }
.g-system { width: 66px; }
.g-sketch { width: 102px; }
.g-body { width: 400px; }
.g-wireframe { width: 101px; }
.g-copying { width: 101px; }
.g-aux { width: 44px; }
.g-dims { width: 44px; }
.g-marks { width: 66px; }
.g-diag { width: 200px; }
.g-drawing { width: 24px; }
.rest { flex: 1; }
.foot { display: flex; align-items: center; height: 14px; padding: 0 2px; background: #e5e5e5; font-size: 8px; line-height: 14px; white-space: nowrap; }
.foot span { flex: 1; text-align: center; }
.foot .more { width: 6px; height: 6px; margin-right: 6px; }
.foot .grip { width: 8px; height: 8px; color: #666; }
.modes .foot { justify-content: center; }
.modes .foot .icon { width: 7px; height: 7px; }
.g-dims .foot .more, .g-marks .foot .more { margin-right: 4px; }

.work { flex: 1; min-height: 0; display: flex; }
.rail { width: 22px; background: #cacaca; border-right: 1px solid #555; flex: none; }
.rail button { width: 22px; height: 21px; justify-content: center; background: #f3f3f3; color: #222; }
.rail .on, .panel-tools .on { background: #4a4a4a; color: #fff; }
.rail .icon { width: 14px; height: 14px; }
.rail i { font-size: 13px; line-height: 16px; }
.rail sub { font-size: 10px; line-height: 1px; vertical-align: baseline; }
.panel { width: 258px; flex: none; display: flex; flex-direction: column; background: #f1f1f1; border-right: 1px solid #555; }
.panel-title { display: flex; align-items: center; justify-content: space-between; height: 16px; padding: 0 2px 0 3px; background: #cbcbcb; }
.panel-title h2 { margin: 0; font-size: 9px; font-weight: 400; }
.panel-title .icon { width: 10px; height: 10px; }
.panel-tools { display: flex; height: 21px; border-bottom: 1px solid #222; }
.panel-tools button { width: 22px; justify-content: center; }
.filter { display: flex; height: 21px; border-bottom: 1px solid #222; background: #fdfdfd; }
.filter > button { width: 22px; justify-content: center; color: #222; }
.filter label { flex: 1; gap: 5px; padding-left: 4px; color: #a0a0a0; }
.filter label .icon { width: 10px; height: 10px; }
.tree-box { flex: none; display: flex; height: 360px; padding-top: 1px; box-sizing: border-box; overflow: hidden; }
.tree { flex: 1; min-width: 0; margin: 0; padding: 0; list-style: none; }
.tree li { box-sizing: border-box; display: flex; height: 22px; border-bottom: 1px solid #e0e0e0; font-size: 10px; }
.tree li:nth-child(3n) { height: 21px; }
.marks { box-sizing: border-box; width: 43px; flex: none; display: flex; align-items: center; justify-content: flex-end; gap: 8px; padding-right: 5px; background: #e6e6e6; color: #222; }
.tree li:not(.root) .marks { box-shadow: 0 1px #c8c8c8; }
.marks .icon { width: 14px; height: 14px; }
.marks em { font: 14px/16px "DejaVu Sans", sans-serif; color: #444; }
.node { flex: 1; min-width: 0; display: flex; align-items: center; padding-left: 27px; overflow: hidden; white-space: nowrap; color: #2a2a2a; }
.node .tw { width: 6px; height: 6px; margin-right: 3px; color: #222; }
.node small { font-size: 10px; margin-left: 1px; }
.stars { font: 10px "Liberation Sans", sans-serif; }
.tree .root { border-bottom-color: #56c2c6; }
.top { padding-left: 11px; box-shadow: inset 0 1px #56c2c6; }
.top .tw { width: 5px; height: 5px; }
.start.node { padding-left: 19px; }
.start.node b { width: 6px; height: 6px; margin: 0 4px 0 3px; border-radius: 50%; background: #777; }
.dim .node { color: #868686; }
.scroll { width: 7px; background: #fafafa; }
.scroll div { height: 92px; background: #b9b9b9; }
.lower { margin-top: 6px; border-top: 1px solid #777; }
.lower .icon { width: 14px; height: 14px; }
.empty { flex: 1; }

.viewport { position: relative; flex: 1; min-width: 0; background: linear-gradient(#dddddd, #c8c8cc 45%, #a6a5af); }
.scene { position: absolute; inset: 0; width: 100%; height: 100%; }
.axis { font: 10px "Noto Sans", sans-serif; }
.z { fill: #6f88e0; }
.x { fill: #b9505a; }
.y { fill: #3aa545; }
.view-tools { position: absolute; top: 0; left: 253px; display: flex; height: 22px; background: #f5f5f5; color: #222; }
.view-tools button { justify-content: center; }
.view-tools .arrow .icon { width: 8px; height: 8px; }
.view-tools .dark { background: #4b4b4b; color: #fff; }
.view-tools .faint { color: #cfcfcf; }
.view-tools .line { box-sizing: border-box; border-right: 1px solid #888; }
.view-tools button:first-child { background: #dedede; border-left: 1px solid #888; align-items: flex-start; }
.view-tools button:first-child .icon { width: 9px; height: 9px; }

.taskbar { display: flex; height: 34px; flex: none; background: #1c2b2c; border-top: 1px solid #444; color: #fff; }
.taskbar .start { width: 39px; justify-content: center; }
.find { width: 270px; padding-left: 10px; gap: 8px; background: #f1f1f1; color: #333; font-size: 13px; padding-right: 6px; }
.tasks { flex: 0 1 539px; display: flex; }
.tasks button { flex: 1; justify-content: center; border-bottom: 2px solid transparent; }
.tasks button .app { width: 22px; height: 22px; }
.tasks .open { border-image: linear-gradient(90deg, transparent 10%, #76b9ed 10%, #76b9ed 90%, transparent 90%) 2; }
.tasks .active { background: #44545a; border-image: none; border-bottom-color: #76b9ed; }
.ya { font: bold 14px "Noto Sans", sans-serif; fill: #fff; }
.ps { font: bold 10px "Noto Sans", sans-serif; fill: #54b4f5; }
.wd { font: bold 9px "Noto Sans", sans-serif; fill: #fff; }
.tray { flex: 1; display: flex; align-items: center; justify-content: flex-end; gap: 8px; padding-right: 19px; font-size: 10px; line-height: 15px; }
.tray .icon { width: 14px; height: 14px; }
.tray time { text-align: center; margin: 0 7px 0 3px; }
</style>
